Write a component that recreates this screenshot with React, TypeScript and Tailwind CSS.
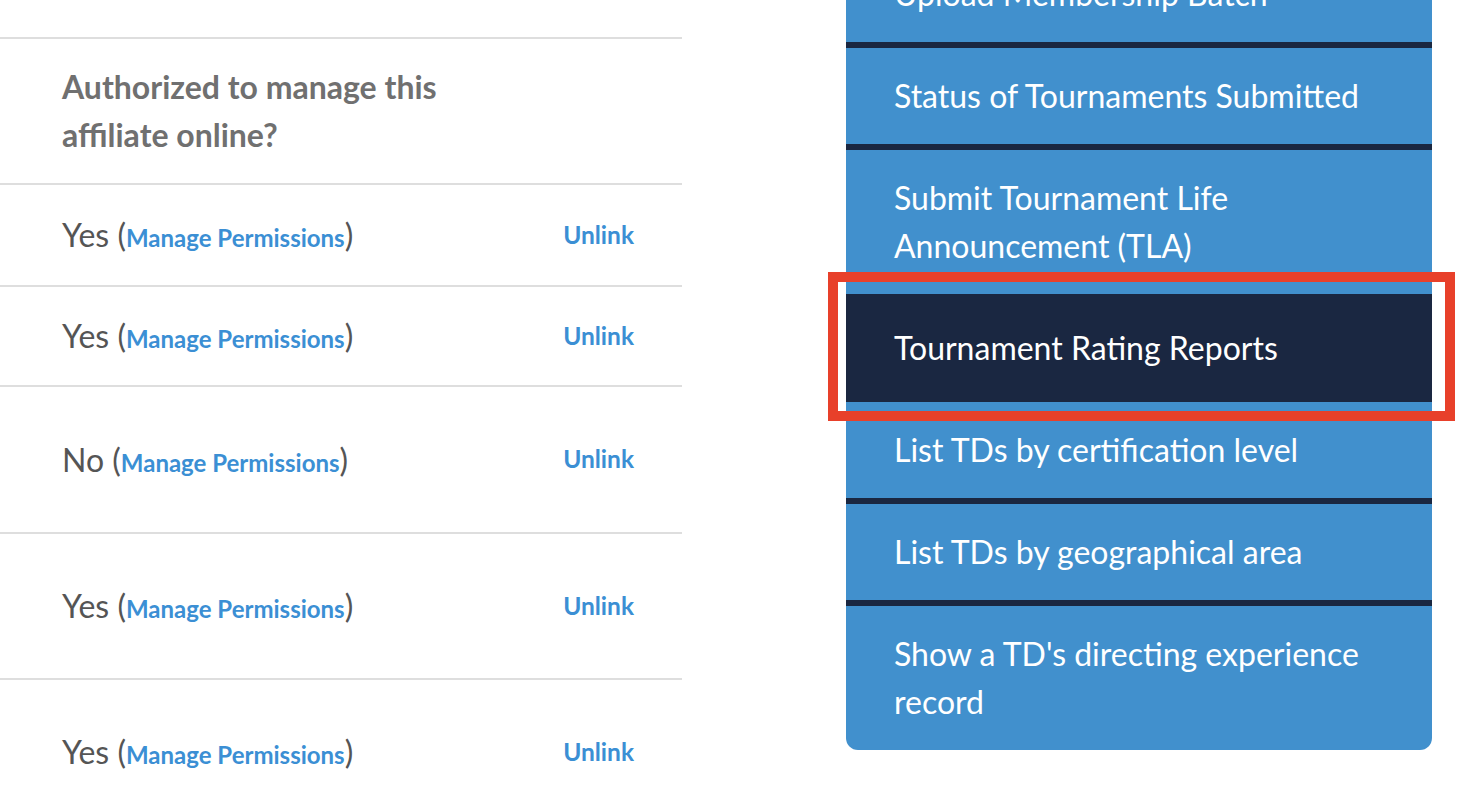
import React from "react";

const rows = [
  { answer: "Yes", height: "h-[102px]" },
  { answer: "Yes", height: "h-[100px]" },
  { answer: "No", height: "h-[147px]" },
  { answer: "Yes", height: "h-[146px]" },
  { answer: "Yes", height: "h-[146px]" },
];

const menu = [
  { label: "Upload Membership Batch" },
  { label: "Status of Tournaments Submitted" },
  { label: "Submit Tournament Life Announcement (TLA)" },
  { label: "Tournament Rating Reports", active: true },
  { label: "List TDs by certification level" },
  { label: "List TDs by geographical area" },
  { label: "Show a TD's directing experience record" },
];

export default function App() {
  return (
    <div
      className="relative h-[806px] w-[1482px] overflow-hidden bg-white"
      style={{ fontFamily: "Lato, 'Noto Sans', sans-serif" }}
    >
      <div className="flex items-start">
        {/* affiliate table column */}
        <div className="w-[682px] pt-[37px]">
          <div className="flex h-[148px] items-center border-y-2 border-[#dedede] pl-[62px]">
            <h3 className="w-[420px] text-[32px] leading-[48px] font-bold text-[#707070]">
              Authorized to manage this affiliate online?
            </h3>
          </div>
          {rows.map((row, i) => (
            <div
              key={i}
              className={`flex ${row.height} items-center justify-between border-b-2 border-[#dedede] pr-[48px] pl-[62px] ${i === rows.length - 1 ? "border-b-0" : ""}`}
            >
              <span className="text-[32px] text-[#555555]">
                {row.answer} (
                <a className="text-[24px] font-bold text-[#3b8fd4]">Manage Permissions</a>)
              </span>
              <a className="text-[24.5px] font-bold text-[#3b8fd4]">Unlink</a>
            </div>
          ))}
        </div>

        {/* side menu */}
        <nav className="mt-[-54px] ml-[164px] w-[586px] overflow-hidden rounded-b-[12px] bg-[#4190cd]">
          {menu.map((item, i) => (
            <div
              key={item.label}
              className={`px-[48px] py-[24px] text-[32px] leading-[48px] text-white ${
                item.active ? "bg-[#1a2741]" : ""
              } ${i < menu.length - 1 ? "border-b-[6px] border-[#1a2741]" : ""}`}
            >
              {item.label}
            </div>
          ))}
        </nav>
      </div>

      {/* annotation highlight */}
      <div className="pointer-events-none absolute top-[272px] left-[828px] h-[149px] w-[627px] border-[10px] border-[#e8402a]" />
    </div>
  );
}
